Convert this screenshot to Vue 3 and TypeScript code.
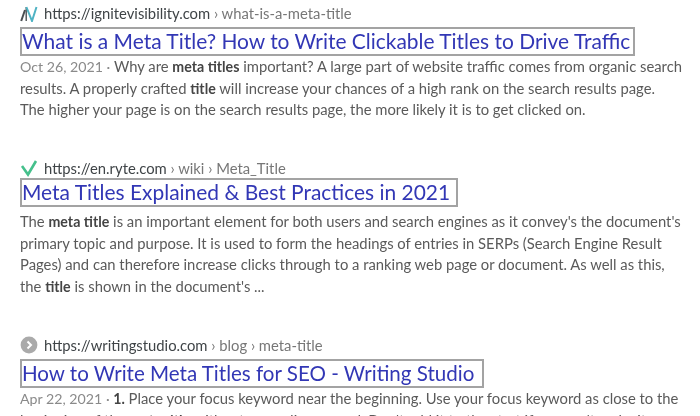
<script setup lang="ts">
interface Line { text: string; bold?: boolean; muted?: boolean }
interface Crumb { host: string; path: string[] }
interface Result {
  icon: string
  url: Crumb
  title: string
  lines: Line[][]
}

const results: Result[] = [
  {
    icon: 'ignite',
    url: { host: 'https://ignitevisibility.com', path: ['what-is-a-meta-title'] },
    title: 'What is a Meta Title? How to Write Clickable Titles to Drive Traffic',
    lines: [
      [
        { text: 'Oct 26, 2021 · ', muted: true },
        { text: 'Why are ' },
        { text: 'meta titles', bold: true },
        { text: ' important? A large part of website traffic comes from organic search' },
      ],
      [
        { text: 'results. A properly crafted ' },
        { text: 'title', bold: true },
        { text: ' will increase your chances of a high rank on the search results page.' },
      ],
      [{ text: 'The higher your page is on the search results page, the more likely it is to get clicked on.' }],
    ],
  },
  {
    icon: 'ryte',
    url: { host: 'https://en.ryte.com', path: ['wiki', 'Meta_Title'] },
    title: 'Meta Titles Explained & Best Practices in 2021',
    lines: [
      [
        { text: 'The ' },
        { text: 'meta title', bold: true },
        { text: " is an important element for both users and search engines as it convey's the document's" },
      ],
      [{ text: 'primary topic and purpose. It is used to form the headings of entries in SERPs (Search Engine Result' }],
      [{ text: 'Pages) and can therefore increase clicks through to a ranking web page or document. As well as this,' }],
      [
        { text: 'the ' },
        { text: 'title', bold: true },
        { text: " is shown in the document's ..." },
      ],
    ],
  },
  {
    icon: 'studio',
    url: { host: 'https://writingstudio.com', path: ['blog', 'meta-title'] },
    title: 'How to Write Meta Titles for SEO - Writing Studio',
    lines: [
      [
        { text: 'Apr 22, 2021 · ', muted: true },
        { text: '1.', bold: true },
        { text: ' Place your focus keyword near the beginning. Use your focus keyword as close to the' },
      ],
      [
        { text: 'beginning of the ' },
        { text: 'meta title', bold: true },
        { text: " without exceeding a word. Don't add it to the start if you can't make it" },
      ],
    ],
  },
]
</script>

<template>
  <main class="page">
    <article v-for="r in results" :key="r.title" class="result" :class="r.icon">
      <div class="url">
        <svg v-if="r.icon === 'ignite'" class="icon" viewBox="0 0 18 18">
          <path d="M1.2 17 L5 6" stroke="#4a4f52" stroke-width="2" fill="none" />
          <path d="M6.2 3 L6.2 17" stroke="#3f4447" stroke-width="1.3" fill="none" />
          <path d="M6.4 3 L12 17 L16.5 3" stroke="#4fb3c4" stroke-width="2" fill="none" />
        </svg>
        <svg v-else-if="r.icon === 'ryte'" class="icon" viewBox="0 0 18 18">
          <path d="M2 7 L8 15.5 L16 2" stroke="#45c08c" stroke-width="2.6" fill="none" />
        </svg>
        <svg v-else class="icon" viewBox="0 0 18 18">
          <circle cx="9" cy="9" r="8.4" fill="#aaa" />
          <path d="M7.5 5.5 L11 9 L7.5 12.5" stroke="#fff" stroke-width="2" fill="none" />
        </svg>
        <span class="host">{{ r.url.host }}</span>
        <span v-for="p in r.url.path" :key="p" class="crumb"> › {{ p }}</span>
      </div>
      <h3 class="title">{{ r.title }}</h3>
      <p class="snippet">
        <span v-for="(line, i) in r.lines" :key="i" class="line">
          <span
            v-for="(part, j) in line"
            :key="j"
            :class="{ bold: part.bold, muted: part.muted }"
          >{{ part.text }}</span>
        </span>
      </p>
    </article>
  </main>
</template>

<style>
html, body { margin: 0; background: #fff; overflow: hidden; }
</style>

<style scoped>
.page {
  width: 700px;
  height: 416px;
  overflow: hidden;
  box-sizing: border-box;
  padding: 2px 0 0 20px;
  background: #fff;
  font-family: Lato, "Open Sans", sans-serif;
  filter: blur(0.45px);
}
.result.ignite { height: 155px; }
.result.ryte { height: 177px; }
.url {
  display: flex;
  align-items: center;
  height: 21px;
  font-size: 14.8px;
  color: #3f4447;
  white-space: pre;
}
.icon {
  width: 18px;
  height: 18px;
  margin-right: 6px;
  flex: none;
}
.crumb { color: #777; }
.title {
  display: block;
  width: fit-content;
  box-sizing: border-box;
  height: 29px;
  line-height: 24px;
  margin: 4px 0 0;
  padding: 0 3px 0 0;
  border: 2.5px solid #a3a3a3;
  font-size: 20.95px;
  font-weight: 400;
  color: #3237b5;
  white-space: nowrap;
}
.ryte .title { margin-top: 0; padding-right: 6px; }
.studio .title { font-size: 20.55px; padding-right: 8px; }
.snippet {
  margin: 0;
  font-size: 14.8px;
  line-height: 21.5px;
  color: #5a5a5a;
}
.ryte .snippet { padding-top: 4px; }
.line { display: block; white-space: pre; }
.bold { font-weight: 700; font-size: 14.2px; color: #444; }
.muted { font-size: 14.2px; color: #8a8a8a; }
</style>
